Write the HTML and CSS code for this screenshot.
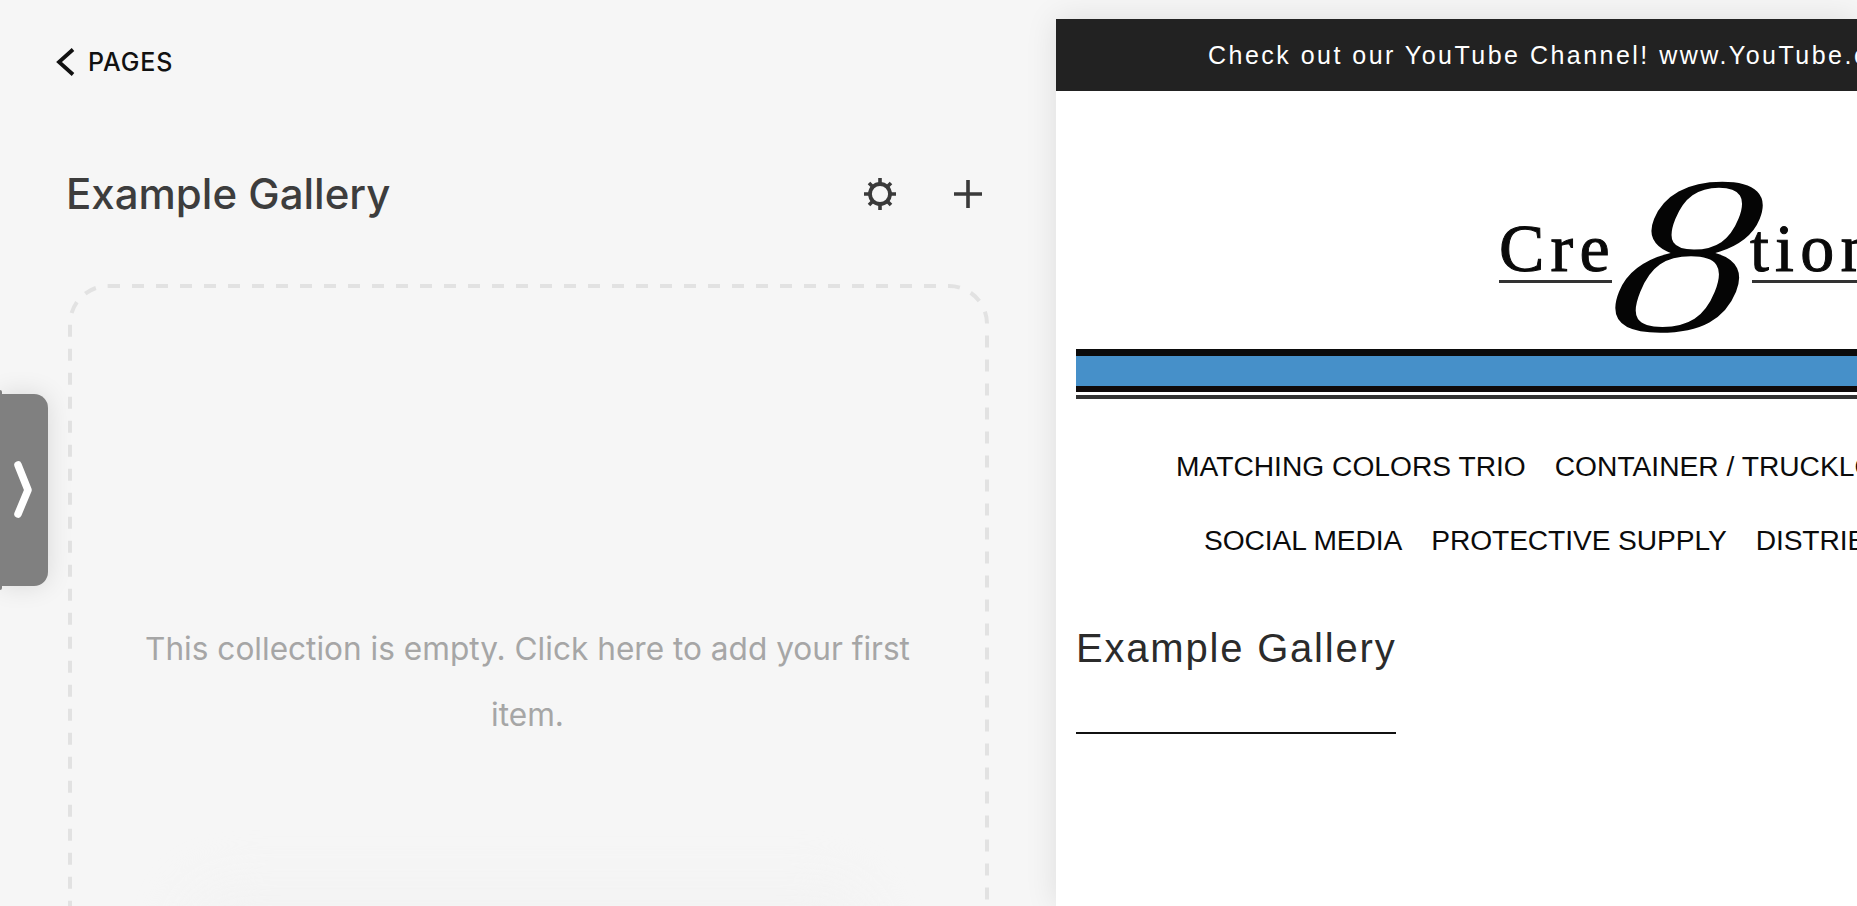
FILE: index.html
```html
<!DOCTYPE html>
<html lang="en">
<head>
<meta charset="utf-8">
<title>Example Gallery</title>
<link rel="stylesheet" href="styles.css">
</head>
<body>
<div class="app">
  <aside class="sidebar">
    <a class="back">
      <svg class="back-icon" width="20" height="28" viewBox="0 0 20 28"><path d="M18 1.500 L4 14 L18 26.500" fill="none" stroke="#111" stroke-width="3.800"/></svg>
      <span>PAGES</span>
    </a>
    <div class="title-row">
      <h1 class="title">Example Gallery</h1>
      <div class="actions">
        <svg class="gear" width="34" height="34" viewBox="0 0 34 34">
          <circle cx="17" cy="17" r="10" fill="none" stroke="#3a3a3a" stroke-width="3.800"/>
          <path d="M17 1v6M17 27v6M1 17h6M27 17h6M6 6l4 4M24 24l4 4M6 28l4-4M24 10l4-4" stroke="#3a3a3a" stroke-width="3.600" fill="none"/>
        </svg>
        <svg class="plus" width="30" height="30" viewBox="0 0 30 30"><path d="M15 1v28M1 15h28" stroke="#3a3a3a" stroke-width="3.600" fill="none"/></svg>
      </div>
    </div>
    <div class="dropzone">
      <svg class="dash" width="921" height="660" viewBox="0 0 921 660"><rect x="2" y="2" width="917" height="760" rx="38" fill="none" stroke="#e2e2e2" stroke-width="4" stroke-dasharray="12 12"/></svg>
      <p class="empty">This collection is empty. Click here to add your first item.</p>
      <div class="ghost"></div>
    </div>
  </aside>
  <main class="preview">
    <div class="announce">Check out our YouTube Channel! www.YouTube.com/Cre8tionInc</div>
    <svg class="logo" width="801" height="322" viewBox="0 0 801 322">
      <text class="logo-word" x="443" y="180">Cre</text>
      <text class="logo-word" x="694" y="180">tion</text>
      <rect x="443" y="189" width="113" height="3" fill="#333"/>
      <rect x="696" y="189" width="105" height="3" fill="#333"/>
      <text class="logo-eight" transform="translate(534 241) skewX(-22) scale(1.25 1)">8</text>
      <rect x="20" y="258" width="781" height="7" fill="#0b0b0b"/>
      <rect x="20" y="265" width="781" height="30" fill="#4690c9"/>
      <rect x="20" y="295" width="781" height="6" fill="#0f0a0a"/>
      <rect x="20" y="304" width="781" height="4" fill="#333"/>
    </svg>
    <nav class="nav">
      <div class="nav-row first"><a>MATCHING COLORS TRIO</a><a>CONTAINER / TRUCKLOAD</a></div>
      <div class="nav-row second"><a>SOCIAL MEDIA</a><a>PROTECTIVE SUPPLY</a><a>DISTRIBUTORS</a></div>
    </nav>
    <h2 class="page-title">Example Gallery</h2>
  </main>
</div>
<div class="tab">
  <svg width="22" height="60" viewBox="0 0 22 60"><path d="M5 5 L15 30 L5 54" fill="none" stroke="#fff" stroke-width="7.500" stroke-linecap="round" stroke-linejoin="round"/></svg>
</div>
</body>
</html>
```
FILE: styles.css
```css
* { box-sizing: border-box; }
html, body { margin: 0; height: 100%; overflow: hidden; }
body { background: #f6f6f6; font-family: "Inter", "Liberation Sans", sans-serif; }
.app { display: flex; height: 906px; width: 1857px; overflow: hidden; }

.sidebar { width: 1056px; flex: none; padding: 48px 67px 0 68px; height: 906px; overflow: hidden; }
.back { display: flex; align-items: center; gap: 13px; margin-left: -13px; height: 28px; color: #111; font-size: 25px; font-weight: 500; letter-spacing: 0.9px; }
.back-icon { flex: none; }
.title-row { display: flex; align-items: center; justify-content: space-between; margin-top: 92px; height: 52px; }
.title { margin: 0 0 0 -2px; font-size: 42px; line-height: 52px; font-weight: 500; color: #3d3d3d; letter-spacing: 0; }
.actions { display: flex; align-items: center; gap: 56px; margin-right: 6px; }
.gear, .plus { display: block; }

.dropzone { position: relative; margin-top: 64px; width: 921px; height: 660px; padding: 332px 60px 0; }
.dash { position: absolute; left: 0; top: 0; }
.empty { margin: 0 0 0 -2px; text-align: center; font-size: 31.600px; line-height: 66px; color: #a6a6a6; }
.ghost { position: absolute; left: 110px; right: 110px; top: 595px; height: 120px; border-radius: 60px; background: #f3f3f3; filter: blur(20px); }

.preview { flex: 1; min-width: 0; margin-top: 19px; background: #fff; box-shadow: 0 0 30px rgba(0,0,0,.1); overflow: hidden; }
.announce { height: 72px; padding-left: 152px; background: #222; color: #fff; font-family: "Liberation Sans", sans-serif; font-size: 25px; line-height: 72px; letter-spacing: 2.480px; white-space: nowrap; }
.logo { display: block; }
.logo-word { font-family: "Liberation Serif", serif; font-size: 68px; letter-spacing: 6.200px; fill: #0a0a0a; stroke: #0a0a0a; stroke-width: 1px; }
.logo-eight { font-family: "Liberation Serif", serif; font-size: 228px; fill: #050505; stroke: #fff; stroke-width: 3px; }

.nav { font-family: "Liberation Sans", sans-serif; font-size: 28.200px; color: #0b0b0b; }
.nav-row { display: flex; gap: 29px; white-space: nowrap; height: 74px; align-items: center; }
.nav-row.first { padding-left: 120px; margin-top: 16px; }
.nav-row.second { padding-left: 148px; letter-spacing: -0.100px; }
.page-title { margin: 35px 0 0 20px; width: 320px; height: 122px; font-family: "Liberation Sans", sans-serif; font-weight: 400; font-size: 40px; line-height: 72px; letter-spacing: 1.800px; color: #2b2b2b; border-bottom: 2px solid #111; white-space: nowrap; }

.tab { position: absolute; left: 0; top: 394px; width: 48px; height: 192px; padding: 66px 0 0 13px; background: #808080; border-radius: 0 14px 14px 0; box-shadow: 0 0 26px rgba(0,0,0,.12); }
.tab::before { content: ""; position: absolute; left: 0; top: -4px; bottom: -4px; width: 2px; background: #808080; border-radius: 0 2px 2px 0; }
.tab svg { display: block; }
```
